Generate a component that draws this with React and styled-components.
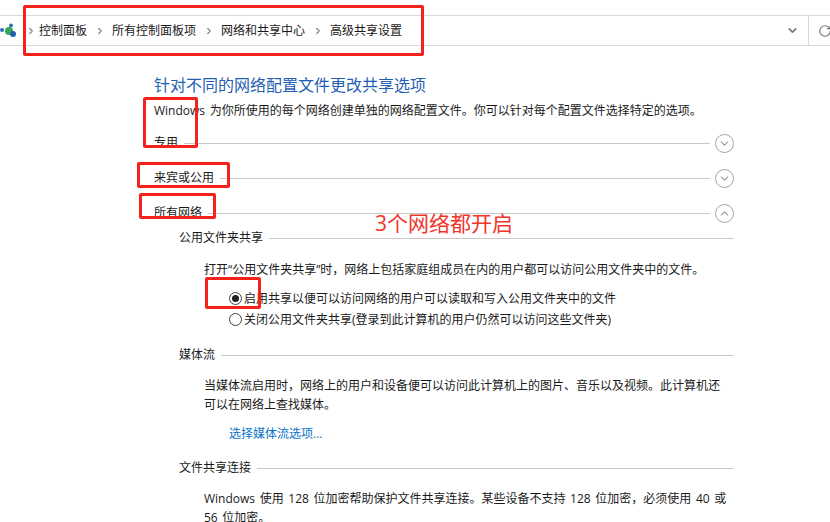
import React from "react";
import styled, { createGlobalStyle } from "styled-components";
import { ChevronDown, ChevronUp, ChevronRight, RotateCw } from "lucide-react";

const GlobalStyle = createGlobalStyle`
    html, body {
        margin: 0;
        padding: 0;
        background: #fff;
        overflow: hidden;
    }
    body {
        font-family: "Open Sans", "Noto Sans CJK SC", sans-serif;
        font-size: 12px;
        word-spacing: 1.5px;
        color: #1a1a1a;
    }
`;

const Page = styled.div`
    position: relative;
    width: 830px;
    height: 522px;
    overflow: hidden;
`;

const AddressBar = styled.div`
    display: flex;
    align-items: center;
    height: 29px;
    margin-top: 15px;
    border-top: 1px solid #d9d9d9;
    border-bottom: 1px solid #d9d9d9;
`;

const Logo = styled.svg`
    width: 17px;
    height: 16px;
    flex: none;
    margin-right: 6px;
`;

const Crumbs = styled.div`
    display: flex;
    align-items: center;
    flex: 1;
`;

const Crumb = styled.span`
    line-height: 16px;
`;

const CrumbArrow = styled.span`
    display: flex;
    justify-content: center;
    width: ${ p => p.$wide }px;
    color: #8a8a8a;
`;

const DropButton = styled.div`
    display: flex;
    justify-content: center;
    width: 32px;
    color: #777;
`;

const RefreshButton = styled.div`
    display: flex;
    align-items: center;
    height: 100%;
    width: 22px;
    flex: none;
    padding-left: 9px;
    box-sizing: border-box;
    border-left: 1px solid #d9d9d9;
    color: #777;
`;

const RefreshIcon = styled( RotateCw )`
    flex: none;
`;

const Content = styled.div`
    width: 580px;
    margin-left: 154px;
    padding-top: 29px;
`;

const Heading = styled.h1`
    margin: 0;
    font-size: 16px;
    font-weight: 400;
    line-height: 20px;
    color: #1f5fb4;
`;

const Intro = styled.p`
    margin: 6px 0 0;
    line-height: 20px;
    white-space: nowrap;
`;

const GroupRow = styled.div`
    display: flex;
    align-items: center;
    height: 20px;
    margin-top: ${ p => p.$top }px;
`;

const Rule = styled.div`
    flex: 1;
    height: 1px;
    margin: 2px 0 0 6px;
    background: #c8c8c8;
`;

const Toggle = styled.div`
    display: flex;
    align-items: center;
    justify-content: center;
    width: 17px;
    height: 17px;
    margin: 2px 0 0 5px;
    border: 1px solid #a5a5a5;
    border-radius: 50%;
    color: #999;
`;

const Block = styled.div`
    padding-left: 25px;
`;

const BlockTitle = styled.div`
    display: flex;
    align-items: center;
    height: 20px;
    margin-top: ${ p => p.$top }px;
`;

const Text = styled.p`
    margin: ${ p => p.$top }px 0 0 25px;
    line-height: 19px;
`;

const RadioRow = styled.label`
    display: flex;
    align-items: center;
    height: 20px;
    margin: ${ p => p.$top }px 0 0 50px;
`;

const Radio = styled.span`
    display: flex;
    align-items: center;
    justify-content: center;
    box-sizing: border-box;
    width: 13px;
    height: 13px;
    margin-right: 2px;
    border: 1px solid #444;
    border-radius: 50%;
    &::after {
        content: "";
        display: ${ p => ( p.$on ? "block" : "none" ) };
        width: 7px;
        height: 7px;
        border-radius: 50%;
        background: #222;
    }
`;

const MediaLink = styled.a`
    display: block;
    margin: 10px 0 0 50px;
    line-height: 20px;
    color: #0a74c9;
`;

const RedBox = styled.div`
    position: absolute;
    box-sizing: border-box;
    left: ${ p => p.$x }px;
    top: ${ p => p.$y }px;
    width: ${ p => p.$w }px;
    height: ${ p => p.$h }px;
    border: 3px solid #f5211b;
    border-radius: 2px;
`;

const Callout = styled.div`
    position: absolute;
    left: 375px;
    top: 209px;
    font-size: 21px;
    line-height: 28px;
    color: #f0352b;
`;

const crumbs = [
    { name: "控制面板", arrow: 25 },
    { name: "所有控制面板项", arrow: 25 },
    { name: "网络和共享中心", arrow: 25 },
    { name: "高级共享设置" },
];

const boxes = [
    { x: 23, y: 5, w: 401, h: 51 },
    { x: 143, y: 97, w: 55, h: 51 },
    { x: 137, y: 162, w: 93, h: 26 },
    { x: 139, y: 193, w: 77, h: 26 },
    { x: 205, y: 277, w: 56, h: 32 },
];

const App = ( ) => (
    <Page>
        <GlobalStyle />
        <AddressBar>
            <Logo viewBox="0 0 17 16">
                <circle cx="2" cy="7" r="2" fill="#2a6fc0" />
                <circle cx="9" cy="8" r="4" fill="#3aa655" />
                <circle cx="11" cy="2.5" r="2" fill="#2a6fc0" />
                <circle cx="13" cy="11" r="3" fill="#1f5fb4" />
            </Logo>
            <CrumbArrow $wide={ 16 }><ChevronRight size={ 10 } strokeWidth={ 3 } /></CrumbArrow>
            <Crumbs>
                { crumbs.map( c => (
                    <React.Fragment key={ c.name }>
                        <Crumb>{ c.name }</Crumb>
                        { c.arrow && (
                            <CrumbArrow $wide={ c.arrow }><ChevronRight size={ 10 } strokeWidth={ 3 } /></CrumbArrow>
                        ) }
                    </React.Fragment>
                ) ) }
            </Crumbs>
            <DropButton><ChevronDown size={ 13 } strokeWidth={ 3 } /></DropButton>
            <RefreshButton><RefreshIcon size={ 14 } strokeWidth={ 2 } /></RefreshButton>
        </AddressBar>
        <Content>
            <Heading>针对不同的网络配置文件更改共享选项</Heading>
            <Intro>Windows 为你所使用的每个网络创建单独的网络配置文件。你可以针对每个配置文件选择特定的选项。</Intro>
            <GroupRow $top={ 11 }>专用<Rule /><Toggle><ChevronDown size={ 13 } /></Toggle></GroupRow>
            <GroupRow $top={ 15 }>来宾或公用<Rule /><Toggle><ChevronDown size={ 13 } /></Toggle></GroupRow>
            <GroupRow $top={ 15 }>所有网络<Rule /><Toggle><ChevronUp size={ 13 } /></Toggle></GroupRow>
            <Block>
                <BlockTitle $top={ 5 }>公用文件夹共享<Rule /></BlockTitle>
                <Text $top={ 13 }>打开“公用文件夹共享”时，网络上包括家庭组成员在内的用户都可以访问公用文件夹中的文件。</Text>
                <RadioRow $top={ 9 }><Radio $on />启用共享以便可以访问网络的用户可以读取和写入公用文件夹中的文件</RadioRow>
                <RadioRow $top={ 1 }><Radio />关闭公用文件夹共享(登录到此计算机的用户仍然可以访问这些文件夹)</RadioRow>
                <BlockTitle $top={ 15 }>媒体流<Rule /></BlockTitle>
                <Text $top={ 12 }>当媒体流启用时，网络上的用户和设备便可以访问此计算机上的图片、音乐以及视频。此计算机还<br />可以在网络上查找媒体。</Text>
                <MediaLink>选择媒体流选项...</MediaLink>
                <BlockTitle $top={ 13 }>文件共享连接<Rule /></BlockTitle>
                <Text $top={ 12 }>Windows 使用 128 位加密帮助保护文件共享连接。某些设备不支持 128 位加密，必须使用 40 或<br />56 位加密。</Text>
            </Block>
        </Content>
        { boxes.map( b => (
            <RedBox key={ `${ b.x }-${ b.y }` } $x={ b.x } $y={ b.y } $w={ b.w } $h={ b.h } />
        ) ) }
        <Callout>3个网络都开启</Callout>
    </Page>
);

export default App;
